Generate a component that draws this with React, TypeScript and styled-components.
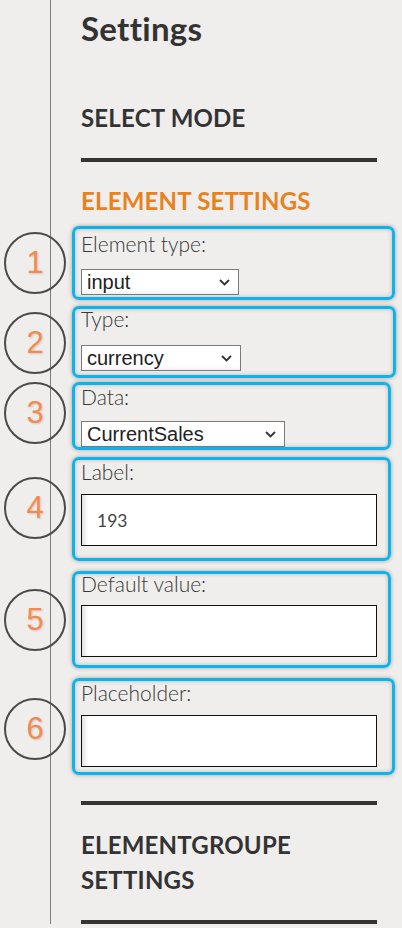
import React from "react";
import styled, { createGlobalStyle } from "styled-components";

const Global = createGlobalStyle`
  html, body { margin: 0; padding: 0; background: #efeeec; }
  body { font-family: Lato, "Open Sans", sans-serif; color: #333; }
  * { box-sizing: border-box; }
`;

const Page = styled.div`
  display: flex;
  align-items: stretch;
  width: 402px;
  background: #efeeec;
`;

const Gutter = styled.div`
  flex: 0 0 51px;
  border-right: 1px solid #7d7d7d;
`;

const Content = styled.main`
  width: 296px;
  margin-left: 30px;
  padding: 8px 0 0 0;
  display: flex;
  flex-direction: column;
`;

const Title = styled.h1`
  margin: 0;
  font-size: 33px;
  line-height: 40px;
  font-weight: 700;
  letter-spacing: 0.3px;
  color: #333;
`;

const Section = styled.h2<{ $accent?: boolean; $mt: number; $lh: number }>`
  margin: ${(p) => p.$mt}px 0 0 0;
  font-size: 24px;
  line-height: ${(p) => p.$lh}px;
  font-weight: 700;
  letter-spacing: 0.2px;
  color: ${(p) => (p.$accent ? "#e8821e" : "#333")};
`;

const Rule = styled.hr<{ $mt: number }>`
  margin: ${(p) => p.$mt}px 0 0 0;
  border: 0;
  height: 4px;
  background: #353433;
`;

const Fields = styled.div`
  display: flex;
  flex-direction: column;
  margin-left: -9px;
`;

const Annot = styled.section<{ $mt: number; $pt: number; $pb: number; $w: number; $gap: number }>`
  position: relative;
  width: ${(p) => p.$w}px;
  margin-top: ${(p) => p.$mt}px;
  padding: ${(p) => p.$pt}px 6px ${(p) => p.$pb}px 6px;
  border: 3px solid #0db4ec;
  border-radius: 7px;
  box-shadow: 0 0 4px rgba(0, 0, 0, 0.32), inset 0 0 4px rgba(0, 0, 0, 0.22);
  display: flex;
  flex-direction: column;
  align-items: flex-start;
  gap: ${(p) => p.$gap}px;
`;

const Badge = styled.span<{ $dy: number }>`
  position: absolute;
  left: -71px;
  top: calc(50% - 31px + ${(p) => p.$dy}px);
  width: 62px;
  height: 62px;
  border: 2px solid #4a4a4a;
  border-radius: 50%;
  display: flex;
  align-items: center;
  justify-content: center;
  font-family: "Liberation Sans", Arial, sans-serif;
  font-size: 31px;
  color: #f58a4e;
  text-shadow: 1px 1px 2px rgba(0, 0, 0, 0.15);
`;

const Label = styled.label`
  display: block;
  font-size: 21px;
  line-height: 20px;
  font-weight: 300;
  color: #383838;
  white-space: nowrap;
`;

const Select = styled.button<{ $w: number }>`
  width: ${(p) => p.$w}px;
  height: 26px;
  margin: 0;
  padding: 0 8px 0 5px;
  border: 1px solid #7a7a7a;
  background: #fff;
  box-shadow: inset 0 -3px 4px -2px rgba(0, 0, 0, 0.08);
  display: flex;
  align-items: center;
  justify-content: space-between;
  font-family: "Liberation Sans", Arial, sans-serif;
  font-size: 20px;
  color: #222;
`;

const Chevron = styled.svg`
  width: 11px;
  height: 7px;
  flex: 0 0 auto;
`;

const TextInput = styled.input`
  width: 296px;
  height: 52px;
  margin: 0;
  padding: 0 0 0 15px;
  border: 1px solid #111;
  background: #fff;
  box-shadow: inset 5px 0 5px -3px rgba(0, 0, 0, 0.16);
  font-family: Lato, sans-serif;
  font-size: 17.5px;
  color: #444;
  outline: none;
`;

type Field = {
  n: number;
  label: string;
  kind: "select" | "input";
  value: string;
  sw?: number;
  mt: number;
  pt: number;
  pb: number;
  gap: number;
  w: number;
  dy: number;
};

const fields: Field[] = [
  { n: 1, label: "Element type:", kind: "select", value: "input", sw: 158, mt: 10, pt: 5, pb: 2, gap: 15, w: 323, dy: 0 },
  { n: 2, label: "Type:", kind: "select", value: "currency", sw: 160, mt: 6, pt: 0, pb: 4, gap: 16, w: 324, dy: 1 },
  { n: 3, label: "Data:", kind: "select", value: "CurrentSales", sw: 204, mt: 4, pt: 2, pb: 0, gap: 14, w: 319, dy: -3 },
  { n: 4, label: "Label:", kind: "input", value: "193", mt: 7, pt: 2, pb: 12, gap: 12, w: 319, dy: -1 },
  { n: 5, label: "Default value:", kind: "input", value: "", mt: 10, pt: 0, pb: 8, gap: 11, w: 319, dy: 0 },
  { n: 6, label: "Placeholder:", kind: "input", value: "", mt: 10, pt: 2, pb: 5, gap: 12, w: 323, dy: 2 },
];

export default function App() {
  return (
    <>
      <Global />
      <Page>
        <Gutter />
        <Content>
          <Title>Settings</Title>
          <Section $mt={55} $lh={30}>SELECT MODE</Section>
          <Rule $mt={25} />
          <Section $accent $mt={24} $lh={30}>ELEMENT SETTINGS</Section>
          <Fields>
            {fields.map((f) => (
              <Annot key={f.n} $mt={f.mt} $pt={f.pt} $pb={f.pb} $w={f.w} $gap={f.gap}>
                <Badge $dy={f.dy}>{f.n}</Badge>
                <Label>{f.label}</Label>
                {f.kind === "select" ? (
                  <Select $w={f.sw ?? 158} type="button">
                    <span>{f.value}</span>
                    <Chevron viewBox="0 0 11 7">
                      <path d="M1 1 L5.5 5.5 L10 1" fill="none" stroke="#333" strokeWidth="1.8" />
                    </Chevron>
                  </Select>
                ) : (
                  <TextInput defaultValue={f.value} />
                )}
              </Annot>
            ))}
          </Fields>
          <Rule $mt={26} />
          <Section $mt={22} $lh={35}>
            ELEMENTGROUPE
            <br />
            SETTINGS
          </Section>
          <Rule $mt={23} />
        </Content>
      </Page>
    </>
  );
}
